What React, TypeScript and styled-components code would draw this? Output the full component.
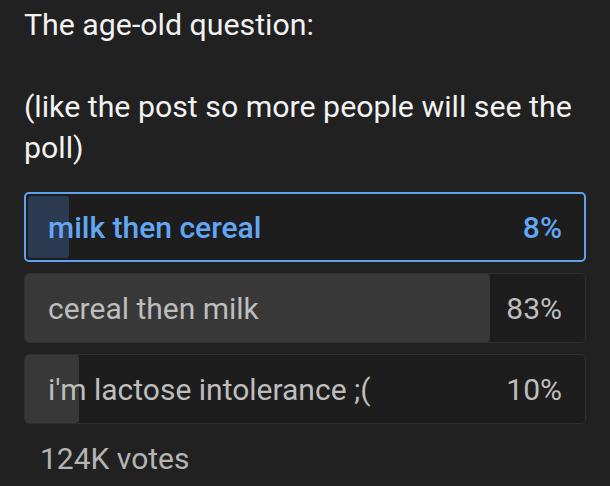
import React from "react";
import styled, { createGlobalStyle } from "styled-components";

const Global = createGlobalStyle`
  html, body { margin: 0; padding: 0; background: #212121; }
  body { font-family: Roboto, "Noto Sans", "Liberation Sans", sans-serif; }
`;

const Page = styled.div`
  width: 610px;
  height: 486px;
  box-sizing: border-box;
  padding: 4px 24px 0 24px;
  background: #212121;
  overflow: hidden;
`;

const Question = styled.div`
  color: #f2f2f2;
  font-size: 30.3px;
  line-height: 41px;
  font-weight: 400;
  white-space: pre-wrap;
`;

const Options = styled.div`
  margin-top: 24px;
  display: flex;
  flex-direction: column;
  gap: 11px;
`;

const Option = styled.div<{ $selected?: boolean }>`
  position: relative;
  height: 70px;
  box-sizing: border-box;
  border-radius: 5px;
  border: ${(p) => (p.$selected ? "2px solid #5ea2ee" : "1px solid #303030")};
  background: #1d1d1d;
  overflow: hidden;
  display: flex;
  align-items: center;
  justify-content: space-between;
  padding: 0 ${(p) => (p.$selected ? "22px" : "23px")};
  font-size: 30px;
  color: ${(p) => (p.$selected ? "#62a7f5" : "#bdbdbd")};
  font-weight: ${(p) => (p.$selected ? 500 : 400)};
`;

const Fill = styled.div<{ $selected?: boolean }>`
  position: absolute;
  left: ${(p) => (p.$selected ? "2px" : "0")};
  top: ${(p) => (p.$selected ? "2px" : "0")};
  bottom: ${(p) => (p.$selected ? "2px" : "0")};
  border-radius: 3px;
  background: ${(p) => (p.$selected ? "#2b3a51" : "#383838")};
`;

const Label = styled.span`
  position: relative;
`;

const Votes = styled.div`
  margin-top: 17px;
  padding-left: 16px;
  color: #b4b4b4;
  font-size: 30px;
  line-height: 35px;
`;

const options = [
  { label: "milk then cereal", pct: 8, fill: 41, selected: true },
  { label: "cereal then milk", pct: 83, fill: 465, selected: false },
  { label: "i'm lactose intolerance ;(", pct: 10, fill: 54, selected: false },
];

export default function App() {
  return (
    <Page>
      <Global />
      <Question>{"The age-old question:\n\n(like the post so more people will see the poll)"}</Question>
      <Options>
        {options.map((o) => (
          <Option key={o.label} $selected={o.selected}>
            <Fill $selected={o.selected} style={{ width: o.fill }} />
            <Label>{o.label}</Label>
            <Label>{o.pct}%</Label>
          </Option>
        ))}
      </Options>
      <Votes>124K votes</Votes>
    </Page>
  );
}
